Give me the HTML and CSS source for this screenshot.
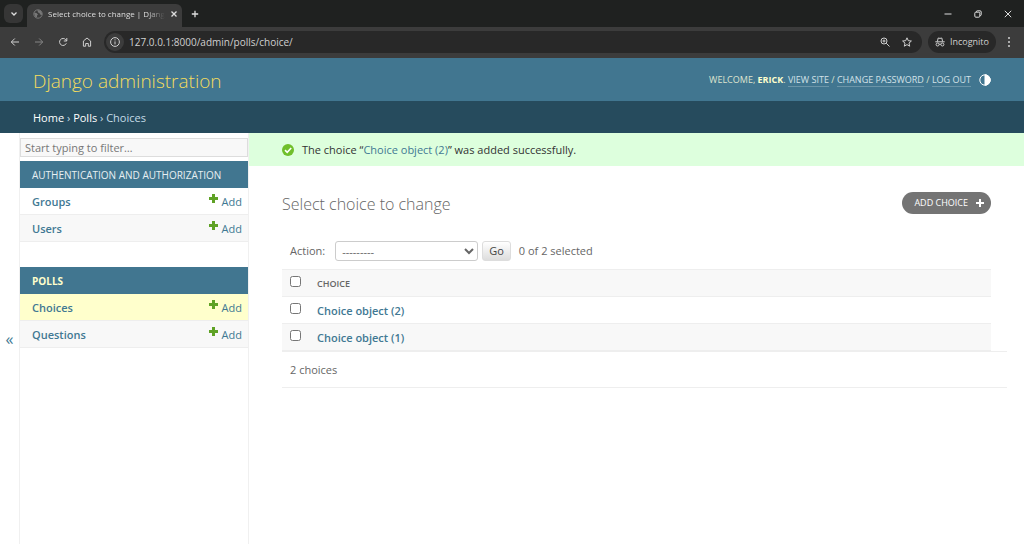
FILE: index.html
```html
<!DOCTYPE html>
<html lang="en">
  <head>
    <meta charset="UTF-8" />
    <meta name="viewport" content="width=device-width, initial-scale=1.0" />
    <title>Select choice to change | Django site admin</title>
    <link rel="stylesheet" href="styles.css">
  </head>
  <body>
    <!-- Browser window -->
    <div class="tab-strip">
      <button class="tab-search" aria-label="Search tabs">
        <svg width="8" height="8" viewBox="0 0 8 8"><path d="M1.5 2.5L4 5l2.500-2.500" /></svg>
      </button>
      <div class="tab">
        <svg class="globe" width="10" height="10" viewBox="0 0 10 10"><circle cx="5" cy="5" r="4.200" /><path class="land" d="M1 3.500l2.500.5 1.500 1.500-1 1v2L2 7.500zM4.500 1l3 .5 1.500 2.500v2L7 5.500 6.500 4 5 3.500z" /></svg>
        <span class="tab-title">Select choice to change | Djang</span>
        <button class="tab-close" aria-label="Close tab">
          <svg width="8" height="8" viewBox="0 0 8 8"><path d="M1.500 1.500l5 5M6.500 1.500l-5 5" /></svg>
        </button>
      </div>
      <button class="new-tab" aria-label="New tab">
        <svg width="8" height="8" viewBox="0 0 8 8"><path d="M4 .8v6.400M.8 4h6.400" /></svg>
      </button>
      <div class="window-buttons">
        <button aria-label="Minimize"><svg width="8" height="8" viewBox="0 0 8 8"><path d="M.5 4h7" /></svg></button>
        <button aria-label="Restore"><svg width="8" height="8" viewBox="0 0 8 8"><rect x=".8" y="2.200" width="5" height="5" rx="1" /><path d="M2.500 2V1.500q0-.7.7-.7H6q1.200 0 1.200 1.200v2.800q0 .7-.7.7H6" /></svg></button>
        <button aria-label="Close"><svg width="8" height="8" viewBox="0 0 8 8"><path d="M.8.8l6.400 6.400M7.200.8L.8 7.200" /></svg></button>
      </div>
    </div>
    <div class="toolbar">
      <button aria-label="Back"><svg width="10" height="10" viewBox="0 0 10 10"><path d="M9 5H1.500M4.800 1.500L1.300 5l3.500 3.500" /></svg></button>
      <button class="off" aria-label="Forward"><svg width="10" height="10" viewBox="0 0 10 10"><path d="M1 5h7.500M5.200 1.500L8.700 5 5.200 8.500" /></svg></button>
      <button aria-label="Reload"><svg width="10" height="10" viewBox="0 0 10 10"><path d="M8.300 6.300A3.500 3.500 0 1 1 7.800 2.800L8.700 4M8.800 1v3H5.800" /></svg></button>
      <button aria-label="Home"><svg width="10" height="10" viewBox="0 0 10 10"><path d="M1.400 9.200V4L5 1l3.600 3v5.200H6.300V6.500H3.700v2.700z" /></svg></button>
      <div class="address">
        <span class="site-info"><svg width="12" height="12" viewBox="0 0 12 12"><circle cx="6" cy="6" r="4.400" /><path d="M6 5.400v3M6 3.400v1" /></svg></span>
        <input type="text" aria-label="Address" value="127.0.0.1:8000/admin/polls/choice/" />
        <button aria-label="Zoom"><svg width="10" height="10" viewBox="0 0 10 10"><circle cx="4" cy="4" r="3" /><path d="M6.200 6.200l3.300 3.300M2.500 4h3M4 2.500v3" /></svg></button>
        <button aria-label="Bookmark"><svg width="10" height="10" viewBox="0 0 10 10"><path d="M5 .8l1.300 2.900 3.100.3L7 6.100l.7 3.100L5 7.600 2.300 9.200 3 6.100.6 4l3.100-.3z" /></svg></button>
      </div>
      <div class="incognito">
        <svg width="10" height="10" viewBox="0 0 10 10"><path d="M.3 4.800h9.400M2.400 4.500L3.200 1l1.800.4L6.800 1l.8 3.500M4.100 7.400q.9-.6 1.800 0" /><circle cx="2.600" cy="7.500" r="1.500" /><circle cx="7.400" cy="7.500" r="1.500" /></svg>
        <span>Incognito</span>
      </div>
      <button class="menu" aria-label="Menu"><svg width="4" height="12" viewBox="0 0 4 12"><circle cx="2" cy="2" r="1" /><circle cx="2" cy="6" r="1" /><circle cx="2" cy="10" r="1" /></svg></button>
    </div>

    <header class="header">
      <a class="branding" href="#">Django administration</a>
      <div class="user-tools">
        <span>Welcome, <strong>Erick</strong>. <a href="#">View site</a> / <a href="#">Change password</a> / <a href="#">Log out</a></span>
        <button class="theme-toggle" aria-label="Toggle theme">
          <svg width="12" height="12" viewBox="0 0 12 12"><circle cx="6" cy="6" r="5.200" /><path d="M6 .8a5.200 5.200 0 0 1 0 10.400z" /></svg>
        </button>
      </div>
    </header>
    <nav class="breadcrumbs"><a href="#">Home</a> › <a href="#">Polls</a> › Choices</nav>

    <div class="main">
      <button class="toggle-nav" aria-label="Toggle navigation">«</button>
      <nav class="sidebar">
        <input class="nav-filter" type="search" placeholder="Start typing to filter…" aria-label="Filter navigation items" />
        <div class="module">
          <h2><a href="#">Authentication and Authorization</a></h2>
          <ul>
            <li><a class="model" href="#">Groups</a><a class="add" href="#"><svg width="9" height="9" viewBox="0 0 9 9"><path d="M4.500 0v9M0 4.500h9" /></svg>Add</a></li>
            <li><a class="model" href="#">Users</a><a class="add" href="#"><svg width="9" height="9" viewBox="0 0 9 9"><path d="M4.500 0v9M0 4.500h9" /></svg>Add</a></li>
          </ul>
        </div>
        <div class="module">
          <h2 class="current-app"><a href="#">Polls</a></h2>
          <ul>
            <li class="current"><a class="model" href="#">Choices</a><a class="add" href="#"><svg width="9" height="9" viewBox="0 0 9 9"><path d="M4.500 0v9M0 4.500h9" /></svg>Add</a></li>
            <li><a class="model" href="#">Questions</a><a class="add" href="#"><svg width="9" height="9" viewBox="0 0 9 9"><path d="M4.500 0v9M0 4.500h9" /></svg>Add</a></li>
          </ul>
        </div>
      </nav>

      <main class="page">
        <div class="message">
          <svg width="12" height="12" viewBox="0 0 12 12"><circle cx="6" cy="6" r="6" /><path d="M3 6.200l2.200 2.100L9.200 4" /></svg>
          <span>The choice “<a href="#">Choice object (2)</a>” was added successfully.</span>
        </div>
        <div class="content">
          <div class="title-row">
            <h1>Select choice to change</h1>
            <a class="add-button" href="#">Add choice <svg width="8" height="8" viewBox="0 0 8 8"><path d="M4 0v8M0 4h8" /></svg></a>
          </div>
          <form>
            <div class="actions">
              <label for="action">Action:</label>
              <select id="action">
                <option value="">---------</option>
                <option value="delete">Delete selected choices</option>
              </select>
              <button type="button">Go</button>
              <span>0 of 2 selected</span>
            </div>
            <table>
              <thead>
                <tr>
                  <th class="check"><input type="checkbox" aria-label="Select all" /></th>
                  <th scope="col">Choice</th>
                </tr>
              </thead>
              <tbody>
                <tr>
                  <td class="check"><input type="checkbox" aria-label="Select Choice object (2)" /></td>
                  <td><a href="#">Choice object (2)</a></td>
                </tr>
                <tr>
                  <td class="check"><input type="checkbox" aria-label="Select Choice object (1)" /></td>
                  <td><a href="#">Choice object (1)</a></td>
                </tr>
              </tbody>
            </table>
            <p class="paginator">2 choices</p>
          </form>
        </div>
      </main>
    </div>
  </body>
</html>
```
FILE: styles.css
```css
* {
  margin: 0;
  padding: 0;
  box-sizing: border-box;
}
body {
  display: flex;
  flex-direction: column;
  min-height: 100vh;
  background-color: #fff;
  color: #666;
  font-family: "Open Sans", "Noto Sans", sans-serif;
  font-size: 11px;
  line-height: 16px;
}
a {
  color: #417893;
  text-decoration: none;
}
button,
input,
select {
  font: inherit;
  color: inherit;
}
button {
  border: none;
  background: none;
  cursor: pointer;
}
svg {
  display: block;
  flex-shrink: 0;
  fill: none;
  stroke: currentColor;
}

/* browser window */
.tab-strip {
  display: flex;
  align-items: center;
  height: 27px;
  padding-left: 4px;
  background-color: #1f2120;
  color: #dedede;
}
.tab-search {
  display: flex;
  align-items: center;
  justify-content: center;
  width: 19px;
  height: 19px;
  border-radius: 6px;
  background-color: #363636;
}
.tab-search svg,
.tab-close svg,
.new-tab svg {
  stroke-width: 1.3;
}
.tab {
  display: flex;
  align-items: center;
  align-self: flex-end;
  gap: 5px;
  width: 155px;
  height: 23px;
  margin-left: 4px;
  padding: 0 6px;
  padding-bottom: 4px;
  border-radius: 6px 6px 0 0;
  background-color: #3c3c3c;
}
.globe {
  color: #777;
}
.globe .land {
  fill: #777;
  stroke: none;
}
.tab-title {
  flex: 1;
  white-space: nowrap;
  font-size: 8px;
  mask-image: linear-gradient(to right, #000 85%, transparent);
}
.new-tab {
  padding: 4px;
  margin-left: 5px;
}
.window-buttons {
  display: flex;
  gap: 22px;
  margin-left: auto;
  padding-right: 12px;
}
.toolbar {
  display: flex;
  align-items: center;
  height: 31px;
  padding: 0 13px 1px 10px;
  gap: 14px;
  background-color: #3c3c3c;
  color: #d0d0d0;
}
.toolbar .off {
  color: #858585;
}
.address {
  display: flex;
  flex: 1;
  align-items: center;
  gap: 12px;
  height: 22px;
  margin-left: -2px;
  padding: 0 10px 0 2px;
  border-radius: 11px;
  background-color: #282828;
}
.site-info {
  padding: 3px;
  border-radius: 50%;
  background-color: #3c3c3c;
}
.address input {
  flex: 1;
  min-width: 0;
  margin-left: -7px;
  border: none;
  outline: none;
  background: none;
  font-size: 10px;
}
.incognito {
  display: flex;
  align-items: center;
  gap: 5px;
  height: 22px;
  margin-left: -8px;
  padding: 0 7px;
  border-radius: 11px;
  background-color: #282828;
  font-size: 9px;
}
.menu {
  margin-left: -3px;
}
.menu svg {
  fill: currentColor;
  stroke: none;
}

/* admin header */
.header {
  display: flex;
  align-items: center;
  justify-content: space-between;
  height: 43px;
  padding: 0 33px;
  background-color: #417690;
  color: #ffc;
}
.branding {
  padding-top: 2px;
  color: #f5dd5d;
  font-size: 19px;
  font-weight: 300;
  line-height: 24px;
}
.user-tools {
  display: flex;
  align-items: center;
  gap: 8px;
  color: #dfe4cf;
  font-size: 9px;
  text-transform: uppercase;
}
.user-tools strong {
  color: #ffc;
}
.user-tools a {
  border-bottom: 1px solid #6b95a8;
  color: #d3e2e8;
}
.theme-toggle {
  color: #fff;
}
.theme-toggle path {
  fill: #fff;
}
.breadcrumbs {
  height: 32px;
  padding: 9px 33px 7px;
  background-color: #264b5d;
  color: #c4dce8;
}
.breadcrumbs a {
  color: #fff;
}

.main {
  display: flex;
  flex: 1;
}
.toggle-nav {
  width: 19px;
  color: #417893;
  font-size: 16px;
}
.sidebar {
  width: 230px;
  padding-top: 5px;
  border: solid #f0f0f0;
  border-width: 0 1px;
}
.nav-filter {
  display: block;
  width: 100%;
  height: 19px;
  margin-bottom: 4px;
  padding: 0 4px;
  border: 1px solid #ddd;
  background-color: #f8f8f8;
}
.nav-filter::placeholder {
  color: #777;
}
.module {
  margin-bottom: 25px;
}
.module h2 {
  padding: 6px 12px 5px;
  background-color: #417690;
  font-size: 10px;
  font-weight: 400;
  text-transform: uppercase;
}
.module h2 a {
  color: #e7eff2;
}
.module .current-app {
  font-weight: 700;
}
.module .current-app a {
  color: #ffc;
}
.module ul {
  list-style: none;
}
.module li {
  display: flex;
  justify-content: space-between;
  padding: 6px 6px 4px 12px;
  border-bottom: 1px solid #eee;
}
.module li:nth-child(even) {
  background-color: #f8f8f8;
}
.module .current {
  background-color: #ffc;
}
.model {
  font-weight: 600;
}
.add {
  display: flex;
  gap: 4px;
}
.add svg {
  color: #5fa225;
  stroke-width: 3;
}

.page {
  flex: 1;
  min-width: 0;
}
.message {
  display: flex;
  align-items: center;
  gap: 8px;
  padding: 9px 33px 8px;
  background-color: #dfd;
  color: #333;
}
.message svg {
  color: #70bf2b;
  fill: currentColor;
  stroke: none;
}
.message path {
  fill: none;
  stroke: #fff;
  stroke-width: 1.600;
}
.content {
  padding: 25px 33px;
}
.title-row {
  display: flex;
  align-items: center;
  justify-content: space-between;
}
h1 {
  padding-top: 1px;
  font-size: 16px;
  font-weight: 300;
  line-height: 24px;
}
.add-button {
  display: flex;
  align-items: center;
  gap: 8px;
  margin-bottom: 2px;
  padding: 3px 7px 3px 12px;
  border-radius: 11px;
  background-color: #747474;
  color: #fff;
  font-size: 9px;
  text-transform: uppercase;
}
.add-button svg {
  stroke-width: 2;
}
.actions {
  display: flex;
  align-items: center;
  margin: 25px 0 8px;
  padding-left: 8px;
}
.actions select {
  width: 143px;
  height: 20px;
  margin: 0 4px 0 10px;
  padding: 0 2px;
  border: 1px solid #ccc;
  border-radius: 3px;
  background-color: #fff;
}
.actions button {
  height: 20px;
  margin-right: 8px;
  padding: 0 6px;
  border: 1px solid #ddd;
  border-radius: 3px;
  background: linear-gradient(#fff, #ddd);
  color: #444;
}
table {
  width: 100%;
  border-collapse: collapse;
  text-align: left;
}
th,
td {
  height: 27px;
  padding: 2px 5px 0;
  border-bottom: 1px solid #eee;
}
th {
  border-top: 1px solid #eee;
  font-size: 9px;
  font-weight: 600;
  text-transform: uppercase;
}
thead tr,
tbody tr:nth-child(even) {
  background-color: #f8f8f8;
}
td a {
  font-weight: 600;
}
.check {
  width: 30px;
  padding: 0 8px 3px;
}
.check input {
  display: block;
  width: 11px;
  height: 11px;
}
.paginator {
  margin-right: -16px;
  padding: 10px 8px 9px;
  border: solid #eee;
  border-width: 1px 0;
}
```
